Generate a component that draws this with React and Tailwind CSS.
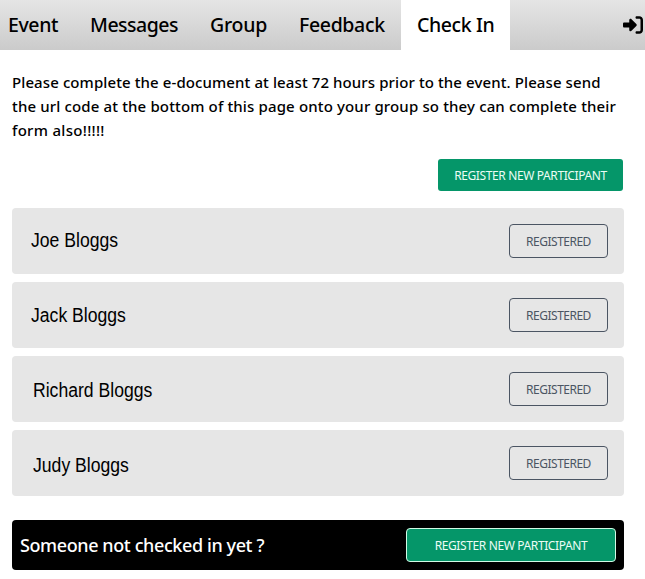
import { FaRightToBracket } from "react-icons/fa6";

const tabs = [
  { label: "Event", box: "w-[75px] pl-[8px]", text: "tracking-[-0.4px]" },
  { label: "Messages", box: "w-[119px] pl-[15px]", text: "tracking-[-0.5px]" },
  { label: "Group", box: "w-[89px] pl-4", text: "tracking-[-0.25px]" },
  { label: "Feedback", box: "w-[118px] pl-4", text: "tracking-[-0.35px]" },
  { label: "Check In", box: "w-[109px] bg-white pl-4", text: "tracking-[-0.4px]" },
];

const people = [
  { name: "Joe Bloggs", pos: "pl-[19px] pb-[3px]" },
  { name: "Jack Bloggs", pos: "pl-[19px] pb-[1px]" },
  { name: "Richard Bloggs", pos: "pl-[21px] pt-[1px]" },
  { name: "Judy Bloggs", pos: "pl-[21px] pt-[3px]" },
];

export default function App() {
  return (
    <div className="h-[579px] w-[645px] overflow-hidden bg-white font-['Noto_Sans','Open_Sans',sans-serif] text-black">
      <nav className="flex h-[50px] bg-linear-to-b from-[#e5e5e5] to-[#cbcbcb] text-[19.5px] font-medium">
        {tabs.map((t) => (
          <a key={t.label} className={`flex h-full shrink-0 items-center whitespace-nowrap ${t.box}`}>
            <span className={t.text}>{t.label}</span>
          </a>
        ))}
        <button aria-label="Sign in" className="ml-auto mr-[2px] shrink-0">
          <FaRightToBracket size={20} />
        </button>
      </nav>

      <main className="pl-3 pr-[21px]">
        <p className="mt-5 whitespace-nowrap text-[15px] font-medium leading-6">
          <span className="tracking-[0.1px]">Please complete the e-document at least 72 hours prior to the event. Please send</span>
          <br />
          <span className="tracking-[0.14px]">the url code at the bottom of this page onto your group so they can complete their</span>
          <br />
          <span className="tracking-[0.3px]">form also!!!!!</span>
        </p>

        <div className="mt-[17px] flex justify-end pr-[1px]">
          <button className="flex h-8 w-[185px] items-center justify-center whitespace-nowrap rounded-[3px] bg-[#059669] pt-[2px] text-[12px] tracking-[-0.38px] text-[#ecfdf5]">
            REGISTER NEW PARTICIPANT
          </button>
        </div>

        <ul className="mt-[17px] flex flex-col gap-2">
          {people.map((p) => (
            <li key={p.name} className="flex h-[66px] items-center justify-between rounded bg-[#e6e6e6] pr-4">
              <span className={`font-['Liberation_Sans',Arial,sans-serif] text-[20px] ${p.pos}`}>
                <span className="inline-block origin-left scale-x-[0.88] whitespace-nowrap">{p.name}</span>
              </span>
              <span className="flex h-[34px] w-[99px] items-center justify-center rounded border border-[#4b5563] pt-[2px] text-[12px] tracking-[-0.5px] text-[#4b5563]">
                REGISTERED
              </span>
            </li>
          ))}
        </ul>

        <div className="mt-6 flex h-[50px] items-center justify-between rounded bg-black pl-2 pr-2">
          <span className="whitespace-nowrap text-[18px] font-medium tracking-[-0.4px] text-white">Someone not checked in yet ?</span>
          <button className="flex h-[34px] w-[210px] items-center justify-center whitespace-nowrap rounded border border-[#d1fae5] bg-[#059669] pt-[2px] text-[12px] tracking-[-0.38px] text-[#ecfdf5]">
            REGISTER NEW PARTICIPANT
          </button>
        </div>
      </main>
    </div>
  );
}
